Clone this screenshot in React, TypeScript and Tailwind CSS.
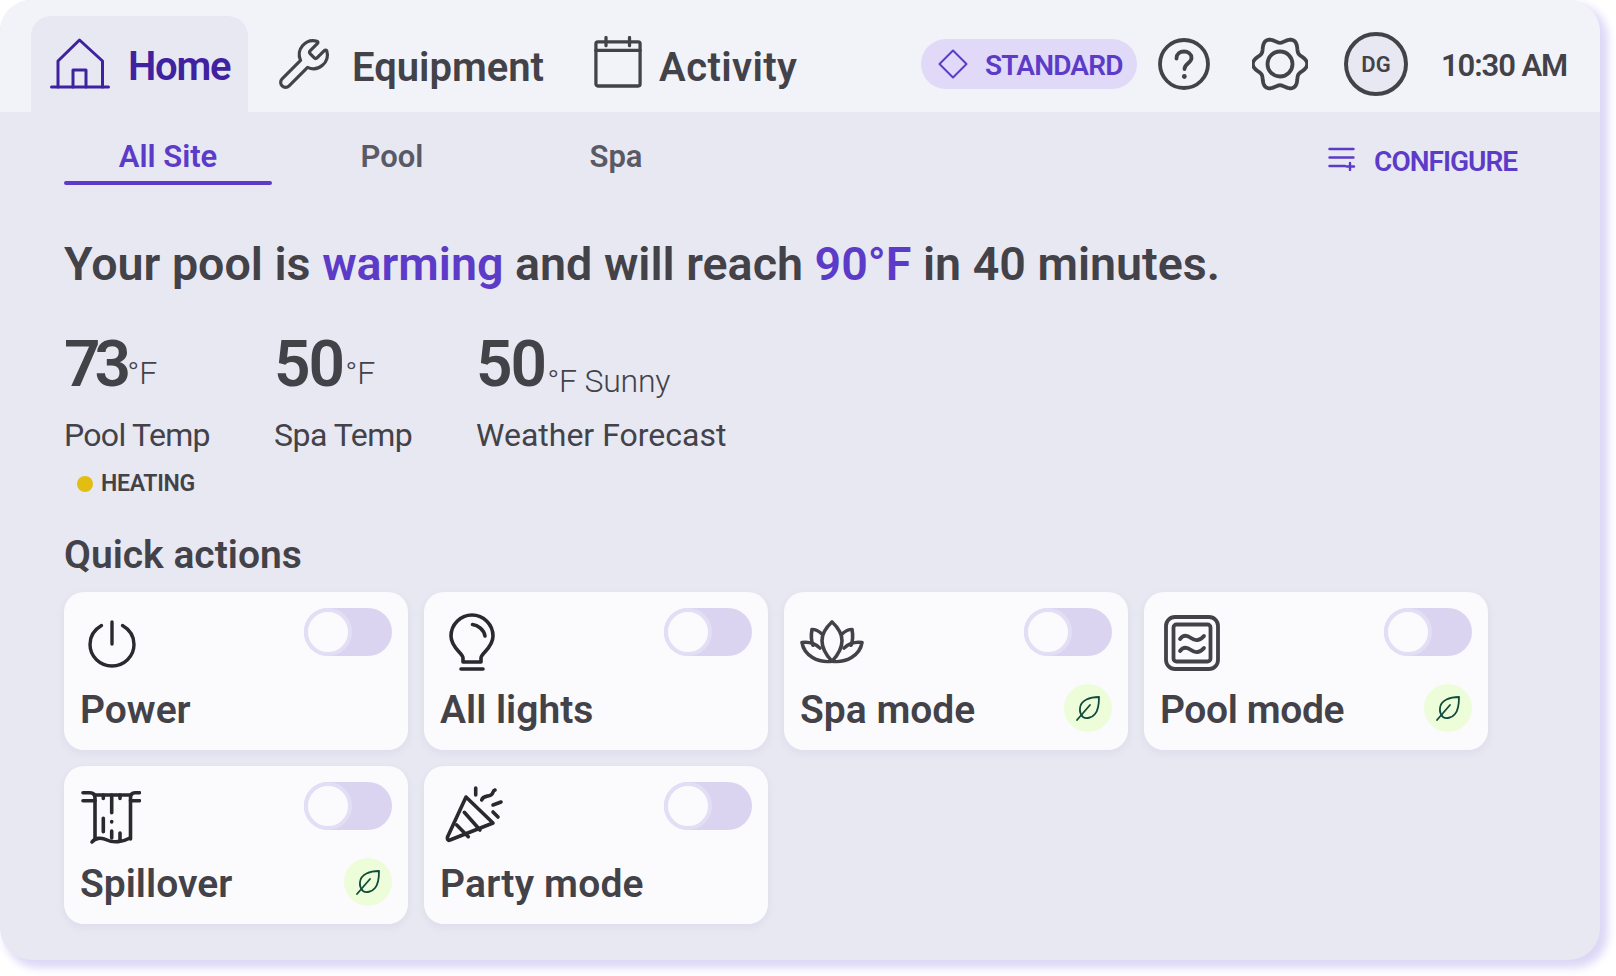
import type { ReactNode } from "react";
import { Wrench } from "lucide-react";

const FONT = "font-['Roboto',sans-serif]";

function HomeIcon() {
  return (
    <svg width="60" height="52" viewBox="0 0 60 52" fill="none" stroke="#3f22a0" strokeWidth="3" strokeLinecap="round" strokeLinejoin="round" className="mb-2 shrink-0">
      <path d="M1.5 50H58.5" />
      <path d="M8 50V24L29.5 3L52.5 24V50" />
      <path d="M23 50V33H36V50" />
    </svg>
  );
}

function CalendarIcon() {
  return (
    <svg width="48" height="52" viewBox="0 0 50 54" fill="none" stroke="#434249" strokeWidth="3.4" strokeLinecap="round" strokeLinejoin="round" className="mb-1 shrink-0">
      <rect x="2" y="6" width="46" height="46" rx="2" />
      <path d="M2 15H48" />
      <path d="M12.5 1.5V10M37 1.5V10" />
    </svg>
  );
}

function DiamondIcon() {
  return (
    <svg width="30" height="30" viewBox="0 0 30 30" fill="none" stroke="#5c3bc8" strokeWidth="2" strokeLinejoin="round" className="shrink-0">
      <path d="M15 1.5L28.5 15L15 28.5L1.5 15Z" />
    </svg>
  );
}

function HelpIcon() {
  return (
    <svg width="52" height="52" viewBox="0 0 52 52" fill="none" stroke="#434249" strokeWidth="3.8" strokeLinecap="round" className="shrink-0">
      <circle cx="26" cy="26" r="24" />
      <path d="M18.5 20.5C18.5 16 22 13.5 26 13.5C30 13.5 33.5 16 33.5 20C33.5 25 26.5 25.5 26.5 31" />
      <circle cx="26.3" cy="38.5" r="2.4" fill="#434249" stroke="none" />
    </svg>
  );
}

function GearIcon() {
  const pts: string[] = [];
  for (let i = 0; i < 120; i++) {
    const a = (i / 120) * Math.PI * 2;
    const r = 24.2 + 3 * Math.cos(6 * a);
    pts.push(`${(28 + r * Math.cos(a)).toFixed(2)},${(28 + r * Math.sin(a)).toFixed(2)}`);
  }
  return (
    <svg width="56" height="56" viewBox="0 0 56 56" fill="none" stroke="#434249" strokeWidth="3.8" strokeLinejoin="round" className="shrink-0">
      <polygon points={pts.join(" ")} />
      <circle cx="28" cy="28" r="12.5" />
    </svg>
  );
}

function ConfigureIcon() {
  return (
    <svg width="28" height="24" viewBox="0 0 28 24" fill="none" stroke="#5c3bc8" strokeWidth="2.4" strokeLinecap="round" className="mb-[5px] shrink-0">
      <path d="M1.5 2H25.5M1.5 10.5H25.5M1.5 19H17" />
      <path d="M22 16V23M18.5 19.5H26" />
    </svg>
  );
}

function PowerIcon() {
  return (
    <svg width="56" height="56" viewBox="0 0 56 56" fill="none" stroke="#2a2a2e" strokeWidth="3.4" strokeLinecap="round" className="ml-1 mt-[5px] shrink-0">
      <path d="M17.5 12.5C10.5 16.5 6 23.5 6 31.5C6 43.5 16 53 28 53C40 53 50 43.5 50 31.5C50 23.5 45.5 16.5 38.5 12.5" />
      <path d="M28 9V31" />
    </svg>
  );
}

function BulbIcon() {
  return (
    <svg width="64" height="64" viewBox="0 0 64 64" fill="none" stroke="#2a2a2e" strokeWidth="3.6" strokeLinecap="round" strokeLinejoin="round" className="shrink-0">
      <path d="M23 54V50C23 45 11 40 11 28A21 21 0 0 1 53 28C53 40 41 45 41 50V54Z" />
      <path d="M21 61H43" />
      <path d="M32.5 16.5C38 17 44 22 45 28" />
    </svg>
  );
}

function LotusIcon() {
  return (
    <svg width="64" height="45" viewBox="0 0 64 48" preserveAspectRatio="none" fill="none" stroke="#434249" strokeWidth="3.6" strokeLinecap="round" strokeLinejoin="round" className="mt-3 shrink-0">
      <path d="M32 44C25 36 22 28 22 22C22 14 27 7 32 2C37 7 42 14 42 22C42 28 39 36 32 44Z" />
      <path d="M22 15C19 12 15 10 12 10C11 16 11 22 13 27" />
      <path d="M42 15C45 12 49 10 52 10C53 16 53 22 51 27" />
      <path d="M32 44C18 46 4 38 2 24C9 23 15 25 20 30" />
      <path d="M32 44C46 46 60 38 62 24C55 23 49 25 44 30" />
    </svg>
  );
}

function PoolIcon() {
  return (
    <svg width="56" height="56" viewBox="0 0 56 56" fill="none" stroke="#434249" strokeWidth="3.8" strokeLinecap="round" strokeLinejoin="round" className="ml-1 mt-[7px] shrink-0">
      <rect x="2" y="2" width="52" height="52" rx="9" />
      <rect x="9.5" y="9.5" width="37" height="37" rx="3" />
      <path d="M16 24C19 20 23 20 27 23C31 26 36 26 40 21" />
      <path d="M16 36C19 32 23 32 27 35C31 38 36 38 40 33" />
    </svg>
  );
}

function SpilloverIcon() {
  return (
    <svg width="60" height="60" viewBox="0 0 60 60" fill="none" stroke="#2a2a2e" strokeWidth="3.6" strokeLinecap="round" strokeLinejoin="round" className="ml-px mt-[5px] shrink-0">
      <path d="M2 5.7H9C12 5.7 14 7.5 14 11V52" />
      <path d="M2 13.7H14" />
      <path d="M58.5 5.7H54C51 5.7 49.5 7.5 49.5 11V52" />
      <path d="M58.5 13.7H49.5" />
      <path d="M14 8H49.5" />
      <path d="M22.3 8V11.5M30.7 8V25.7M39 8V11.5" />
      <path d="M22.3 31.3V44.7M30.7 34.5V35M30.7 44V51M39 46V53" />
      <path d="M11 55C14 51 20 50 26 53C32 56 42 55 49 51" />
    </svg>
  );
}

function PartyIcon() {
  return (
    <svg width="64" height="64" viewBox="0 0 64 64" fill="none" stroke="#2a2a2e" strokeWidth="3.6" strokeLinecap="round" strokeLinejoin="round" className="shrink-0">
      <path d="M26 15L53 41L10 58C8 59 7 57 7.5 55Z" />
      <path d="M24.3 30.3L40 48M16.7 43L28.3 54.7" />
      <path d="M35.7 6V13" />
      <path d="M41.7 18C43 13 48 15 51 13C54 11 52 9 55 8" />
      <path d="M53 23L61 20M53 30L58 35" />
    </svg>
  );
}

function LeafIcon() {
  return (
    <svg width="28" height="28" viewBox="0 0 28 28" fill="none" stroke="#0f4c3a" strokeWidth="1.8" strokeLinecap="round" strokeLinejoin="round" className="shrink-0">
      <path d="M25 3C16 3 7 6 6 14C5.5 18 7 21 9 23C12 25 18 24 21 20C24.5 16 25 9 25 3Z" />
      <path d="M3 26L16 11" />
    </svg>
  );
}

function Toggle() {
  return (
    <div className="flex h-12 w-[88px] shrink-0 items-center rounded-full bg-[#dbd4f0]">
      <div className="h-12 w-12 rounded-full border-4 border-[#e2def6] bg-[#fbfbfe]" />
    </div>
  );
}

function LeafBadge() {
  return (
    <div className="flex h-12 w-12 shrink-0 items-center justify-center rounded-full bg-[#edfcd9]">
      <LeafIcon />
    </div>
  );
}

function ActionCard({ icon, label, eco, labelClass }: { icon: ReactNode; label: string; eco?: boolean; labelClass?: string }) {
  return (
    <div className="flex h-[158px] w-[344px] flex-col justify-between rounded-[20px] bg-[#fbfbfe] pb-[18px] pl-4 pr-4 pt-4 shadow-[0_3px_8px_rgba(90,80,160,0.08)]">
      <div className="flex h-14 items-start justify-between">
        <div className="h-14">{icon}</div>
        <Toggle />
      </div>
      <div className="flex h-12 items-center justify-between">
        <span className={`mt-[5px] text-[39px] font-semibold leading-none text-[#434249] ${labelClass ?? ""}`}>{label}</span>
        {eco && <LeafBadge />}
      </div>
    </div>
  );
}

function Temp({
  value,
  unit,
  label,
  className,
  valueClass,
  unitClass,
  labelClass,
}: {
  value: string;
  unit: string;
  label: string;
  className: string;
  valueClass: string;
  unitClass: string;
  labelClass?: string;
}) {
  return (
    <div className={className}>
      <div className="flex h-[68px] items-end leading-none text-[#434249]">
        <span className={`text-[64px] font-semibold leading-none ${valueClass}`}>{value}</span>
        <span className={`ml-0.5 text-[32px] font-light leading-none ${unitClass}`}>{unit}</span>
      </div>
      <div className={`mt-4 text-[32px] leading-[44px] text-[#434249] ${labelClass ?? ""}`}>{label}</div>
    </div>
  );
}

export default function App() {
  return (
    <div className={`min-h-[976px] bg-white ${FONT}`}>
      <div className="h-[960px] w-[1600px] overflow-hidden rounded-[32px] bg-[#e8e8f2] shadow-[6px_6px_8px_2px_#ddd8f6]">
        <header className="flex h-28 items-stretch bg-[#f2f3f9] pl-[31px]">
          <div className="mt-4 flex w-[217px] items-center gap-[18px] rounded-t-[20px] bg-[#e8e8f2] pl-[19px] pt-1.5">
            <HomeIcon />
            <span className="text-[40px] font-semibold leading-none tracking-[-1.2px] text-[#3f22a0]">Home</span>
          </div>
          <div className="ml-7 flex items-center gap-5 pt-4">
            <Wrench size={56} strokeWidth={1.35} color="#434249" />
            <span className="mt-2 text-[40px] font-semibold leading-none text-[#434249]">Equipment</span>
          </div>
          <div className="ml-[50px] flex items-center gap-[17px] pt-4">
            <CalendarIcon />
            <span className="mt-2 text-[40px] font-semibold leading-none tracking-[0.4px] text-[#434249]">Activity</span>
          </div>
          <div className="ml-auto flex items-center pr-[33px] pt-4">
            <div className="flex h-[50px] w-[216px] items-center gap-[17px] rounded-full bg-[#e0d9f7] pl-[17px]">
              <DiamondIcon />
              <span className="mt-[3px] text-[28px] font-semibold leading-none tracking-[-0.8px] text-[#5c3bc8]">STANDARD</span>
            </div>
            <div className="ml-[21px]"><HelpIcon /></div>
            <div className="ml-[42px]"><GearIcon /></div>
            <div className="ml-[36px] flex h-16 w-16 items-center justify-center rounded-full border-4 border-[#434249] bg-[#e8e8f2] pt-px text-[22px] font-semibold text-[#434249]">DG</div>
            <div className="ml-[33px] mt-[3px] text-[31px] font-semibold leading-none tracking-[-1.1px] text-[#434249]">10:30 AM</div>
          </div>
        </header>

        <main className="px-16">
          <div className="flex items-start justify-between pr-[19px]">
            <nav className="flex">
              <div className="flex h-[73px] w-[208px] flex-col items-center justify-end">
                <span className="text-[31px] font-semibold leading-none text-[#5c3bc8]">All Site</span>
                <span className="mt-[9px] h-1 w-full rounded-full bg-[#5c3bc8]" />
              </div>
              <div className="ml-4 flex h-[73px] w-[208px] flex-col items-center justify-end pb-[13px]">
                <span className="text-[31px] font-semibold leading-none text-[#5a5a66]">Pool</span>
              </div>
              <div className="ml-4 flex h-[73px] w-[208px] flex-col items-center justify-end pb-[13px]">
                <span className="text-[31px] font-semibold leading-none text-[#5a5a66]">Spa</span>
              </div>
            </nav>
            <div className="flex h-16 items-end gap-[18px]">
              <ConfigureIcon />
              <span className="text-[28px] font-semibold leading-none tracking-[-1px] text-[#5c3bc8]">CONFIGURE</span>
            </div>
          </div>

          <h1 className="mt-[51px] text-[46.6px] font-semibold leading-[56px] text-[#434249]">
            Your pool is <span className="text-[#5c3bc8]">warming</span> and will reach <span className="text-[#5c3bc8]">90°F</span> in 40 minutes.
          </h1>

          <div className="mt-[37px] flex">
            <div className="w-[210px]">
              <Temp value="73" unit="°F" label="Pool Temp" className="" valueClass="tracking-[-6px]" unitClass="mb-2" labelClass="tracking-[-0.7px]" />
              <div className="ml-[13px] mt-[13px] flex items-center gap-2 text-[23px] font-semibold leading-7 tracking-[-0.3px] text-[#434249]">
                <span className="h-4 w-4 rounded-full bg-[#e2bd12]" />
                HEATING
              </div>
            </div>
            <Temp value="50" unit="°F" label="Spa Temp" className="w-[202px]" valueClass="tracking-[-2px]" unitClass="mb-2" labelClass="tracking-[-0.5px]" />
            <Temp value="50" unit="°F Sunny" label="Weather Forecast" className="" valueClass="tracking-[-2px]" unitClass="tracking-[-0.2px]" />
          </div>

          <h2 className="mt-[33px] text-[39px] font-semibold leading-[48px] text-[#434249]">Quick actions</h2>

          <div className="mt-[13px] grid w-[1424px] grid-cols-[repeat(4,344px)] gap-4">
            <ActionCard icon={<PowerIcon />} label="Power" />
            <ActionCard icon={<BulbIcon />} label="All lights" />
            <ActionCard icon={<LotusIcon />} label="Spa mode" eco />
            <ActionCard icon={<PoolIcon />} label="Pool mode" eco labelClass="tracking-[-0.4px]" />
            <ActionCard icon={<SpilloverIcon />} label="Spillover" eco />
            <ActionCard icon={<PartyIcon />} label="Party mode" labelClass="tracking-[0.2px]" />
          </div>
        </main>
      </div>
    </div>
  );
}
